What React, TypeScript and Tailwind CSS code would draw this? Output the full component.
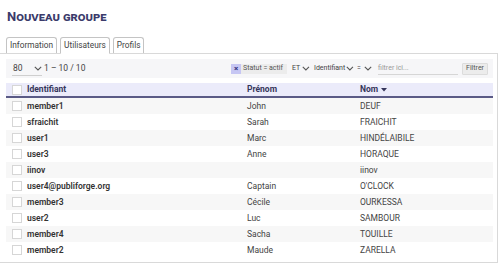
import React from "react";

const rows = [
  ["member1", "John", "DEUF"],
  ["sfraichit", "Sarah", "FRAICHIT"],
  ["user1", "Marc", "HINDÉLAIBILE"],
  ["user3", "Anne", "HORAQUE"],
  ["iinov", "", "iinov"],
  ["user4@publiforge.org", "Captain", "O'CLOCK"],
  ["member3", "Cécile", "OURKESSA"],
  ["user2", "Luc", "SAMBOUR"],
  ["member4", "Sacha", "TOUILLE"],
  ["member2", "Maude", "ZARELLA"],
];

function Chev({ className = "" }: { className?: string }) {
  return (
    <svg width="8" height="5" viewBox="0 0 8 5" className={className}>
      <path d="M0.8 0.8 L4 4 L7.2 0.8" fill="none" stroke="#555" strokeWidth="1.1" />
    </svg>
  );
}

function Box() {
  return <div className="w-[10px] h-[10px] bg-white border border-[#d6d6d6]" />;
}

export default function App() {
  return (
    <div className="w-[500px] h-[263px] bg-white overflow-hidden font-['Roboto',sans-serif] text-[#333]">
      <h1 className="pl-[7px] pt-[9px] h-[37px] text-[13px] leading-[16px] font-bold [font-variant:small-caps] text-[#3b3b6b]">
        Nouveau groupe
      </h1>
      <div className="flex items-end gap-[3px] pl-[6px] h-[16px] relative z-10">
        {["Information", "Utilisateurs", "Profils"].map((t, i) => (
          <div
            key={t}
            className={
              "h-[16px] px-[3px] flex items-center text-[8.3px] text-[#444] bg-white border border-[#c4c4c4] rounded-t-[3px] " +
              (i === 1 ? "border-b-white h-[17px] -mb-px" : "border-b-0")
            }
          >
            {t}
          </div>
        ))}
      </div>
      <div className="w-[498px] h-[210px] border-t border-r border-b border-[#d9d9d9] pl-[6px] pr-[4px] pt-[5px]">
        <div className="h-[19px] bg-[#f6f6f8] flex items-center pl-[6px] pr-[5px]">
          <div className="w-[30px] h-[14px] flex items-center justify-between border-b border-[#cfcfcf] pl-[1px] text-[8.5px] text-[#444]">
            <span>80</span>
            <Chev />
          </div>
          <span className="ml-[2px] text-[8.5px] text-[#444]">1 – 10 / 10</span>
          <div className="ml-auto flex items-center text-[7px] text-[#555]">
            <div className="w-[10px] h-[10px] bg-[#c6c6f3] flex items-center justify-center text-[#2e2e7a] text-[8px] font-bold leading-none">
              ×
            </div>
            <div className="h-[10px] w-[46px] bg-[#ececec] flex items-center pl-[2px]">Statut = actif</div>
            <div className="ml-[5px] flex items-center gap-[2px] w-[18px]">
              <span className="text-[#444]">ET</span>
              <Chev />
            </div>
            <div className="ml-[4px] flex items-center gap-[1px] w-[40px]">
              <span className="text-[#444]">Identifiant</span>
              <Chev />
            </div>
            <div className="ml-[3px] flex items-center gap-[3px] w-[18px]">
              <span className="text-[#444]">=</span>
              <Chev />
            </div>
            <div className="ml-[3px] w-[80px] h-[12px] border-b border-[#d6d6d6] flex items-center text-[#999]">
              filtrer ici...
            </div>
            <div className="ml-[4px] w-[26px] h-[12px] bg-[#ececec] border border-[#dcdcdc] rounded-[1px] flex items-center justify-center text-[#555]">
              Filtrer
            </div>
          </div>
        </div>
        <div className="mt-[5px]">
          <div className="h-[15px] bg-[#ebebfa] border-b-2 border-[#5a5a86] grid grid-cols-[15px_220px_113px_1fr] items-center pl-[6px] text-[8.5px] font-bold text-[#35355a]">
            <Box />
            <span>Identifiant</span>
            <span>Prénom</span>
            <span className="flex items-center gap-[3px]">
              Nom
              <svg width="6" height="4" viewBox="0 0 6 4">
                <path d="M0 0 L6 0 L3 3.5 Z" fill="#35355a" />
              </svg>
            </span>
          </div>
          {rows.map((r, i) => (
            <div
              key={r[0]}
              className={
                "h-[16px] grid grid-cols-[15px_220px_113px_1fr] items-center pl-[6px] text-[8.5px] " +
                (i % 2 === 0 ? "bg-[#f7f7f7]" : "bg-white")
              }
            >
              <Box />
              <span className="font-semibold text-[#333]">{r[0]}</span>
              <span className="text-[#444]">{r[1]}</span>
              <span className="text-[#444]">{r[2]}</span>
            </div>
          ))}
        </div>
      </div>
    </div>
  );
}
